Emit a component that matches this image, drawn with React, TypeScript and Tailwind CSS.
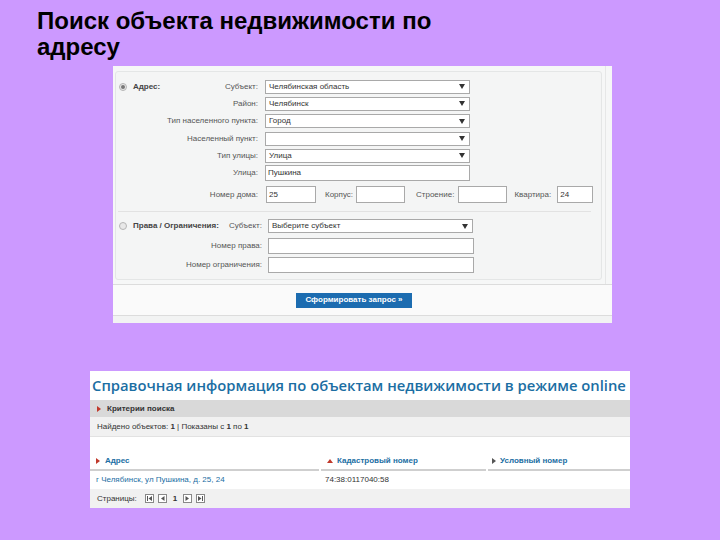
import React from "react";

function Select({ value, w, ml = "ml-[6px]" }: { value: string; w: string; ml?: string }) {
	return (
		<div className={`${ml} ${w} h-[14px] bg-white border border-[#a9a9a9] flex items-center justify-between pl-[3px] pr-[4px]`}>
			<span className="text-[8px] text-[#333]">{value}</span>
			<svg width="6" height="5" viewBox="0 0 6 5">
				<path d="M0 0 H6 L3 5 Z" fill="#333" />
			</svg>
		</div>
	);
}

function Input({ value = "", w, ml = "ml-[6px]", h = "h-[16px]" }: { value?: string; w: string; ml?: string; h?: string }) {
	return (
		<div className={`${ml} ${w} ${h} bg-white border border-[#a9a9a9] flex items-center pl-[2px]`}>
			<span className="text-[8px] text-[#333]">{value}</span>
		</div>
	);
}

function Radio({ checked }: { checked?: boolean }) {
	return (
		<div className="w-[8px] h-[8px] rounded-full border border-[#b5b5b5] bg-[#e8e8e8] flex items-center justify-center">
			{checked && <div className="w-[4px] h-[4px] rounded-full bg-[#777]" />}
		</div>
	);
}

function Row({ label, children }: { label: string; children: React.ReactNode }) {
	return (
		<div className="flex items-center h-[17.3px]">
			<div className="w-[143px] text-right text-[8px] text-[#555] pr-[1px]">{label}</div>
			{children}
		</div>
	);
}

function PagerIcon({ d }: { d: string }) {
	return (
		<div className="w-[9px] h-[9px] border border-[#888] bg-white flex items-center justify-center">
			<svg width="7" height="7" viewBox="0 0 7 7">
				<path d={d} fill="#555" />
			</svg>
		</div>
	);
}

function Tri({ dir, color }: { dir: "right" | "up"; color: string }) {
	return dir === "right" ? (
		<svg width="4" height="6" viewBox="0 0 4 6">
			<path d="M0 0 L4 3 L0 6 Z" fill={color} />
		</svg>
	) : (
		<svg width="6" height="4" viewBox="0 0 6 4">
			<path d="M0 4 L3 0 L6 4 Z" fill={color} />
		</svg>
	);
}

export default function App() {
	const sans = { fontFamily: '"Liberation Sans", Arial, sans-serif' };
	return (
		<div className="w-[720px] h-[540px] bg-[#cc99ff] overflow-hidden" style={sans}>
			{/* Slide title */}
			<div className="pl-[37px] pt-[8px] text-[24px] leading-[26px] font-bold text-black">
				Поиск объекта недвижимости по
				<br />
				адресу
			</div>

			{/* Search form screenshot */}
			<div className="ml-[113px] mt-[6px] w-[499px] h-[257px] bg-[#f6f7f7] flex flex-col">
				<div className="flex h-[218px]">
					<div className="ml-[2px] mt-[5px] w-[487px] h-[209px] border border-[#e4e6e6] rounded-[3px] bg-[#f4f5f5] flex flex-col pt-[6px]">
						<div className="flex items-center h-[17.3px]">
							<div className="w-[143px] flex items-center justify-between pl-[3px] pr-[1px]">
								<div className="flex items-center gap-[6px]">
									<Radio checked />
									<span className="text-[8px] font-bold text-[#444]">Адрес:</span>
								</div>
								<span className="text-[8px] text-[#555]">Субъект:</span>
							</div>
							<Select value="Челябинская область" w="w-[205px]" />
						</div>
						<Row label="Район:">
							<Select value="Челябинск" w="w-[205px]" />
						</Row>
						<Row label="Тип населенного пункта:">
							<Select value="Город" w="w-[205px]" />
						</Row>
						<Row label="Населенный пункт:">
							<Select value="" w="w-[205px]" />
						</Row>
						<Row label="Тип улицы:">
							<Select value="Улица" w="w-[205px]" />
						</Row>
						<Row label="Улица:">
							<Input value="Пушкина" w="w-[205px]" />
						</Row>
						<div className="flex items-center h-[22px] mt-[2px]">
							<div className="w-[143px] text-right text-[8px] text-[#555] pr-[1px]">Номер дома:</div>
							<Input value="25" w="w-[50px]" ml="ml-[7px]" h="h-[17px]" />
							<span className="ml-[9px] text-[8px] text-[#555]">Корпус:</span>
							<Input w="w-[49px]" ml="ml-[3px]" h="h-[17px]" />
							<span className="ml-[11px] text-[8px] text-[#555]">Строение:</span>
							<Input w="w-[49px]" ml="ml-[4px]" h="h-[17px]" />
							<span className="ml-[7px] text-[8px] text-[#555]">Квартира:</span>
							<Input value="24" w="w-[36px]" ml="ml-[6px]" h="h-[17px]" />
						</div>
						<div className="mt-[5px] ml-[2px] w-[473px] border-t border-[#e2e2e2]" />
						<div className="flex items-center h-[17px] mt-[6px]">
							<div className="w-[146px] flex items-center justify-between pl-[3px]">
								<div className="flex items-center gap-[6px]">
									<Radio />
									<span className="text-[8px] font-bold text-[#444]">Права / Ограничения:</span>
								</div>
								<span className="text-[8px] text-[#555]">Субъект:</span>
							</div>
							<Select value="Выберите субъект" w="w-[205px]" />
						</div>
						<div className="flex items-center h-[19px] mt-[2px]">
							<div className="w-[146px] text-right text-[8px] text-[#555]">Номер права:</div>
							<Input w="w-[206px]" />
						</div>
						<div className="flex items-center h-[19px]">
							<div className="w-[146px] text-right text-[8px] text-[#555]">Номер ограничения:</div>
							<Input w="w-[206px]" />
						</div>
					</div>
					<div className="ml-[3px] w-[1px] h-[218px] bg-[#e6e7e7]" />
				</div>
				<div className="border-t border-[#dcdcdc] bg-[#fafafa] h-[31px] flex items-center">
					<div className="ml-[183px] w-[116px] h-[15px] bg-[#1c6cb0] flex items-center justify-center text-[8px] font-bold text-white">
						Сформировать запрос »
					</div>
				</div>
				<div className="border-t border-[#dcdcdc] flex-1 bg-[#f2f3f3]" />
			</div>

			{/* Results screenshot */}
			<div className="ml-[90px] mt-[48px] w-[540px] h-[137px] bg-white flex flex-col">
				<div
					className="h-[29px] flex items-center pl-[2px] text-[14.8px] font-semibold text-[#1b6ea3] whitespace-nowrap"
					style={{ fontFamily: '"Open Sans", "Liberation Sans", sans-serif' }}
				>
					Справочная информация по объектам недвижимости в режиме online
				</div>
				<div className="h-[17px] bg-[#d9d9d9] flex items-center pl-[7px] gap-[6px]">
					<Tri dir="right" color="#c0392b" />
					<span className="text-[8px] font-bold text-[#333]">Критерии поиска</span>
				</div>
				<div className="h-[20px] bg-[#f1f1f1] flex items-center pl-[7px] text-[8px] text-[#333] border-b border-[#e2e2e2]">
					Найдено объектов:&nbsp;<b>1</b>&nbsp;| Показаны с&nbsp;<b>1</b>&nbsp;по&nbsp;<b>1</b>
				</div>
				<div className="h-[16px]" />
				<div className="flex h-[18px] text-[8px] font-bold text-[#1b6ea3]">
					<div className="w-[229px] flex items-center gap-[5px] pl-[6px] border-b-[2px] border-[#cfcfcf]">
						<Tri dir="right" color="#c0392b" />
						Адрес
					</div>
					<div className="ml-[2px] w-[165px] flex items-center gap-[4px] pl-[6px] border-b-[2px] border-[#cfcfcf]">
						<Tri dir="up" color="#c0392b" />
						Кадастровый номер
					</div>
					<div className="ml-[2px] flex-1 flex items-center gap-[4px] pl-[4px] border-b-[2px] border-[#cfcfcf]">
						<Tri dir="right" color="#555" />
						Условный номер
					</div>
				</div>
				<div className="flex h-[18px] items-center text-[8px] bg-white">
					<div className="w-[231px] pl-[6px] text-[#1b6ea3]">г Челябинск, ул Пушкина, д. 25, 24</div>
					<div className="pl-[4px] text-[#333]">74:38:0117040:58</div>
				</div>
				<div className="flex-1 bg-[#f1f1f1] flex items-center pl-[7px] gap-[4px] text-[8px] text-[#333]">
					<span className="mr-[4px]">Страницы:</span>
					<PagerIcon d="M1 1 H2 V6 H1 Z M6 1 L2.5 3.5 L6 6 Z" />
					<PagerIcon d="M5.5 1 L2 3.5 L5.5 6 Z" />
					<b className="mx-[2px]">1</b>
					<PagerIcon d="M1.5 1 L5 3.5 L1.5 6 Z" />
					<PagerIcon d="M1 1 L4.5 3.5 L1 6 Z M5 1 H6 V6 H5 Z" />
				</div>
			</div>
		</div>
	);
}
